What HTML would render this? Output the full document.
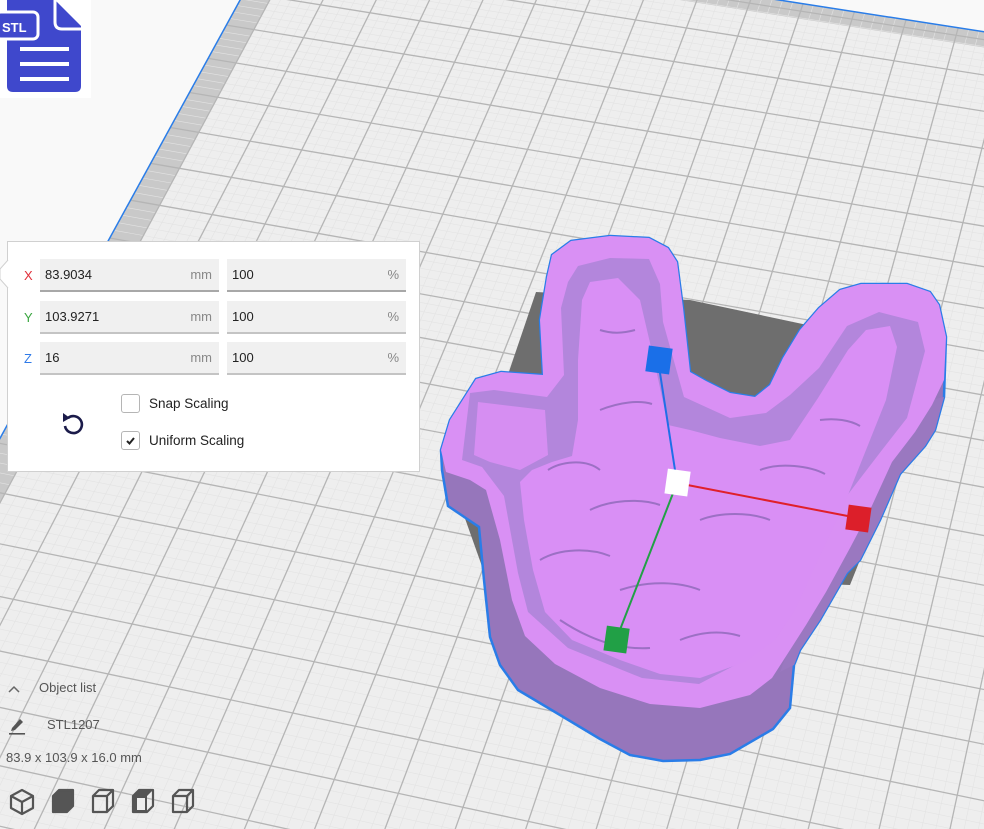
<!DOCTYPE html>
<html><head><meta charset="utf-8">
<style>
html,body{margin:0;padding:0;width:984px;height:829px;overflow:hidden;background:#f9f9f9;font-family:"Liberation Sans",sans-serif;}
#scene{position:absolute;left:0;top:0;overflow:hidden;}
.panel{position:absolute;left:7px;top:241px;width:413px;height:231px;background:#fff;border:1px solid #d0d0d0;box-sizing:border-box;}
.field{position:absolute;height:33px;background:#f0f0f0;border-bottom:2px solid #c4c4c4;box-sizing:border-box;font-size:13px;color:#222;line-height:31px;padding-left:5px;}
.field .u{position:absolute;right:7px;top:0;color:#888;}
.lab{position:absolute;font-size:13px;line-height:16px;}
.cb{position:absolute;left:113px;width:19px;height:19px;border:1px solid #b5b5b5;border-radius:3px;box-sizing:border-box;}
.t{position:absolute;font-size:13.5px;color:#222;}
.b{position:absolute;font-size:13px;color:#555;}
</style></head><body>
<svg id="scene" width="984" height="829" viewBox="0 0 984 829" xmlns="http://www.w3.org/2000/svg">
<g id="plate"></g>
<!-- shadow -->
<polygon points="536,292 690,300 812,326 868,540 850,585 484,572 462,510" fill="#6e6e6e"/>
<!-- model silhouette (sides) -->
<path d="M547,277 L552,255 571,241 610,236 649,238 668,248 677,262 683,308 690,372 706,381 730,393 755,397 770,385 783,358 800,330 819,308 840,290 861,284 907,284 930,292 939,305 946,337 944,397 935,430 925,446 900,474 880,520 860,560 847,573 820,620 800,650 794,665 790,708 773,729 730,754 700,760 663,761 630,755 600,739 560,715 518,690 500,665 490,637 484,580 479,527 448,506 442,470 441,450 450,420 476,379 501,372 543,375 540,320 Z" fill="#9676bb" stroke="#2a7de8" stroke-width="2.5"/>
<!-- right side wall strip -->
<path d="M944,397 L935,430 925,446 900,474 880,520 860,560 847,573 820,620 800,650 794,665 L780,672 792,640 815,600 842,556 866,510 888,462 912,430 930,400 Z" fill="#9a78c0"/>
<!-- top rim -->
<path d="M547,277 L552,255 571,241 610,236 649,238 668,248 677,262 683,308 690,372 706,381 730,393 755,397 770,385 783,358 800,330 819,308 840,290 861,284 907,284 930,292 939,305 946,337 944,380 932,405 915,432 892,462 870,510 850,548 826,592 806,625 790,650 772,678 750,695 700,708 650,704 600,688 555,664 525,636 512,600 500,540 486,490 470,480 446,472 441,450 450,420 476,379 501,372 543,375 540,320 Z" fill="#d990f4"/>
<!-- inner cavity walls -->
<path d="M568,282 L578,266 610,258 649,259 660,284 663,322 684,397 730,418 766,413 790,395 819,368 847,326 879,312 918,322 925,351 907,418 882,450 836,510 783,584 762,626 741,662 699,684 642,678 568,648 528,612 518,573 504,496 482,467 462,460 470,393 494,390 547,397 564,375 561,308 Z" fill="#b386dc"/>
<!-- thumb recess floor -->
<path d="M478,402 L545,410 548,455 520,470 490,462 474,455 Z" fill="#d68ef2"/>
<!-- hand surface -->
<path d="M582,300 L590,282 618,278 640,300 654,360 668,425 690,430 720,438 760,446 790,440 818,398 848,350 866,330 890,326 897,347 886,400 866,450 846,500 818,560 795,610 775,640 745,662 700,678 660,674 620,660 572,640 545,612 533,570 524,520 520,482 532,470 552,462 572,456 578,420 578,360 Z" fill="#d98ff5"/>
<path d="M548,470 C560,462 585,458 600,470 M590,510 C610,500 640,498 660,505 M540,560 C560,548 590,548 610,556 M620,590 C650,580 680,582 700,590 M700,520 C720,512 750,512 770,520 M760,470 C780,462 810,466 825,474 M560,620 C590,640 620,650 650,648 M680,640 C700,632 720,630 740,636 M600,330 C615,335 628,332 635,330 M600,410 C620,402 640,400 652,404 M820,420 C835,418 850,420 860,426" stroke="#9c70c4" stroke-width="2" fill="none"/>
<!-- gizmo -->
<line x1="658" y1="360" x2="677" y2="483" stroke="#1f6fe8" stroke-width="2"/>
<line x1="677" y1="483" x2="858" y2="518" stroke="#e0202a" stroke-width="2"/>
<line x1="677" y1="483" x2="616" y2="640" stroke="#22a045" stroke-width="2"/>
<rect x="647" y="347" width="24" height="26" fill="#1a6fe8" transform="rotate(8 659 360)"/>
<rect x="666" y="470" width="23" height="25" fill="#ffffff" transform="rotate(8 677 483)"/>
<rect x="847" y="506" width="23" height="25" fill="#dc1f2a" transform="rotate(8 858 518)"/>
<rect x="605" y="627" width="23" height="25" fill="#21a046" transform="rotate(8 616 640)"/>
<!-- STL logo -->
<rect x="0" y="0" width="91" height="98" fill="#fff"/>
<path d="M7,0 H55 L81,26 V86 Q81,92 75,92 H13 Q7,92 7,86 Z" fill="#3f48cc"/>
<path d="M55,0 V22 Q55,29 62,29 H81" fill="none" stroke="#fff" stroke-width="3"/>
<rect x="-4" y="12" width="42" height="27" rx="5" fill="#3f48cc" stroke="#fff" stroke-width="3"/>
<text x="2" y="32" font-family="Liberation Sans,sans-serif" font-weight="bold" font-size="13" fill="#fff">STL</text>
<rect x="20" y="47" width="49" height="4" fill="#fff"/>
<rect x="20" y="62" width="49" height="4" fill="#fff"/>
<rect x="20" y="77" width="49" height="4" fill="#fff"/>
<!-- bottom icons -->
<g fill="none" stroke="#555" stroke-width="2.2" stroke-linejoin="round">
<path d="M22,790 L33,796 V808 L22,814 L11,808 V796 Z M11,796 L22,802 L33,796 M22,802 V814"/>
<path d="M53,796 L59,790 H73 V806 L67,812 H53 Z" fill="#555"/>
<path d="M93,796 L99,790 H113 V806 L107,812 H93 Z M93,796 H107 V812 M107,796 L113,790" />
<path d="M133,796 L139,790 H153 V806 L147,812 H133 Z"/>
<path d="M173,796 L179,790 H193 V806 L187,812 H173 Z M173,796 H187 V812 M187,796 L193,790"/>
</g>
<path d="M133,796 L139,790 H153 L147,796 V812 H133 Z" fill="#555"/>
<path d="M137,798 H145 V810 H137 Z" fill="#eee"/>
<path d="M9,692 L14,687 L19,692" fill="none" stroke="#666" stroke-width="1.5"/>
<path d="M12,728 L20,719 L23,722 L15,730 L11,731 Z" fill="#555"/>
<rect x="9" y="733" width="16" height="1.6" fill="#555"/>
</svg>

<div class="panel">
  <svg style="position:absolute;left:-9px;top:18px" width="10" height="30"><path d="M9,0 L1,9 L1,19 L9,28" fill="#fff" stroke="#d0d0d0"/></svg>
  <div class="lab" style="left:16px;top:26px;color:#e0303a">X</div>
  <div class="lab" style="left:16px;top:68px;color:#3aa640">Y</div>
  <div class="lab" style="left:16px;top:109px;color:#2f7ae8">Z</div>
  <div class="field" style="left:32px;top:17px;width:179px;border-bottom-color:#a8a8a8">83.9034<span class="u">mm</span></div>
  <div class="field" style="left:219px;top:17px;width:179px;border-bottom-color:#a8a8a8">100<span class="u">%</span></div>
  <div class="field" style="left:32px;top:59px;width:179px">103.9271<span class="u">mm</span></div>
  <div class="field" style="left:219px;top:59px;width:179px">100<span class="u">%</span></div>
  <div class="field" style="left:32px;top:100px;width:179px">16<span class="u">mm</span></div>
  <div class="field" style="left:219px;top:100px;width:179px">100<span class="u">%</span></div>
  <div class="cb" style="top:152px"></div>
  <div class="cb" style="top:189px"><svg width="17" height="17" style="position:absolute;left:0;top:0"><path d="M5,9 L7.5,11.5 L12,6" fill="none" stroke="#222" stroke-width="2"/></svg></div>
  <div class="t" style="left:141px;top:154px">Snap Scaling</div>
  <div class="t" style="left:141px;top:191px">Uniform Scaling</div>
  <svg style="position:absolute;left:52px;top:167px" width="26" height="28" viewBox="0 0 26 28"><path d="M8,9 A8.5,8.5 0 1 1 5,17" fill="none" stroke="#1b1b4a" stroke-width="2.6"/><path d="M3,4 L10,9 L3,13 Z" fill="#1b1b4a"/></svg>
</div>
<div class="b" style="left:39px;top:680px">Object list</div>
<div class="b" style="left:47px;top:717px">STL1207</div>
<div class="b" style="left:6px;top:750px">83.9 x 103.9 x 16.0 mm</div>

<script>
(function(){
var A=[282.3,-77],VU=[-13660,-2238],VV=[1700,-2665],a=-0.0031*1.1,b=-0.01069*1.1;
var H=[[a*VU[0],b*VV[0],A[0]],[a*VU[1],b*VV[1],A[1]],[a,b,1]];
function P(u,v){var d=a*u+b*v+1;return [(a*u*VU[0]+b*v*VV[0]+A[0])/d,(a*u*VU[1]+b*v*VV[1]+A[1])/d];}
function inv(m){var A_=m[0][0],B=m[0][1],C=m[0][2],D=m[1][0],E=m[1][1],F=m[1][2],G=m[2][0],Hh=m[2][1],I=m[2][2];
var det=A_*(E*I-F*Hh)-B*(D*I-F*G)+C*(D*Hh-E*G);
return [[(E*I-F*Hh)/det,(C*Hh-B*I)/det,(B*F-C*E)/det],[(F*G-D*I)/det,(A_*I-C*G)/det,(C*D-A_*F)/det],[(D*Hh-E*G)/det,(B*G-A_*Hh)/det,(A_*E-B*D)/det]];}
var Hi=inv(H);
function Q(x,y){var w=Hi[2][0]*x+Hi[2][1]*y+Hi[2][2];return [(Hi[0][0]*x+Hi[0][1]*y+Hi[0][2])/w,(Hi[1][0]*x+Hi[1][1]*y+Hi[1][2])/w];}
var ou=Q(323,0)[0];ou=ou-Math.floor(ou);
var ov=Q(226,25)[1];ov=ov-Math.floor(ov);
var UM=30,VM=30;
function vmax(u){return Math.max(0,Math.min(VM,(0.1-1-a*u)/b));}
function umax(v){return Math.max(0,Math.min(UM,(0.1-1-b*v)/a));}
var g=document.getElementById('plate'),s='';
function poly(pts,fill){s+='<polygon points="'+pts.map(function(p){return p[0].toFixed(1)+','+p[1].toFixed(1)}).join(' ')+'" fill="'+fill+'"/>';}
function ln(p,q,c,w){s+='<line x1="'+p[0].toFixed(1)+'" y1="'+p[1].toFixed(1)+'" x2="'+q[0].toFixed(1)+'" y2="'+q[1].toFixed(1)+'" stroke="'+c+'" stroke-width="'+w+'"/>';}
poly([P(0,0),P(UM,0),P(UM,vmax(UM)),P(umax(VM),VM),P(0,VM)],'#eeeeee');
poly([P(0,0),P(UM,0),P(UM,0.45),P(0.5,0.45)],'#c9c9c9');
poly([P(0,0),P(0.55,0),P(0.55,VM),P(0,VM)],'#c9c9c9');
var i,u,v;
for(i=0;i<UM*5;i++){u=ou+i*0.2;if(i%5)ln(P(u,0),P(u,vmax(u)),'#e3e3e3',0.6);}
for(i=0;i<VM*5;i++){v=ov+i*0.2;if(i%5)ln(P(0,v),P(umax(v),v),'#e3e3e3',0.6);}
for(i=0;i<UM;i++){u=ou+i;ln(P(u,0),P(u,vmax(u)),'#b5b5b5',1.3);}
for(i=0;i<VM;i++){v=ov+i;ln(P(0,v),P(umax(v),v),'#b5b5b5',1.3);}
ln(P(0,0),P(UM,0),'#2a7de8',1.5);ln(P(0,0),P(0,VM),'#2a7de8',1.5);
g.innerHTML=s;
})();
</script>
</body></html>
